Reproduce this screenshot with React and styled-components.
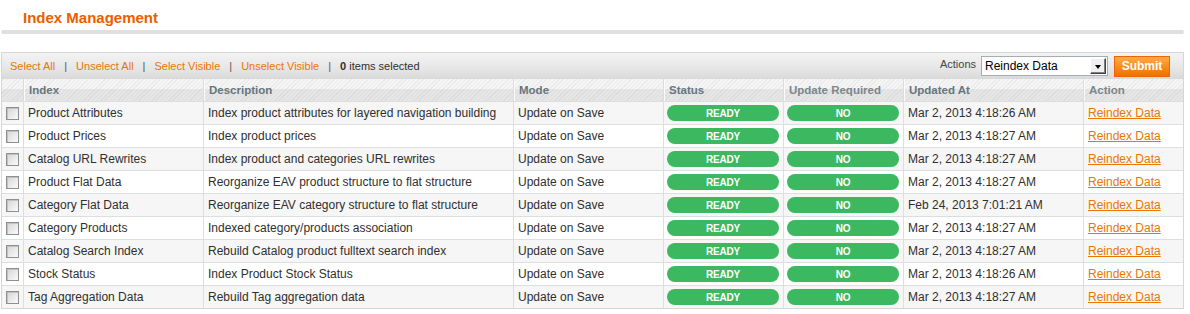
import React from "react";
import styled, { createGlobalStyle } from "styled-components";

const GlobalStyle = createGlobalStyle`
  html, body { margin: 0; padding: 0; background: #fff; }
  body { font-family: Arial, "Liberation Sans", Helvetica, sans-serif; font-size: 12px; color: #2f2f2f; }
  * { box-sizing: border-box; }
`;

const COLS = "21px 180px 310px 150px 120px 120px 180px 100px";

const Page = styled.div`
  width: 1190px;
  padding: 0 6px 0 1px;
`;

const ContentHeader = styled.div`
  padding-top: 9px;
`;

const Title = styled.h3`
  margin: 0;
  padding: 0 0 3px 22px;
  font-size: 15px;
  line-height: 18px;
  font-weight: bold;
  color: #eb5e00;
`;

const HeaderRule = styled.div`
  height: 4px;
  background: #dfdfdf;
  border-radius: 2px;
`;

const Grid = styled.div`
  margin-top: 18px;
  border: 1px solid #d6d6d6;
`;

const Massaction = styled.div`
  height: 26px;
  display: flex;
  align-items: center;
  padding: 0 13px 0 8px;
  background: linear-gradient(to bottom, #f3f3f3 0%, #e6e6e6 60%, #d9d9d9 100%);
  font-size: 11px;
`;

const MassLinks = styled.div`
  display: flex;
  align-items: center;
  flex: 1;
`;

const MassLink = styled.a`
  color: #ea7601;
  text-decoration: none;
  cursor: pointer;
`;

const Separator = styled.span`
  color: #555;
  padding: 0 9px 0 9px;
`;

const Count = styled.span`
  color: #2f2f2f;
  strong { font-weight: bold; }
`;

const ActionsBox = styled.div`
  display: flex;
  align-items: center;
`;

const ActionsLabel = styled.span`
  color: #444;
  font-size: 11px;
  margin-right: 5px;
  position: relative;
  top: -2px;
`;

const FakeSelect = styled.div`
  width: 127px;
  height: 20px;
  display: flex;
  align-items: center;
  justify-content: space-between;
  border: 1px solid #a5acb2;
  background: #fff;
  padding: 0 1px 0 3px;
  font-size: 12px;
  color: #000;
`;

const SelectArrow = styled.span`
  width: 16px;
  height: 16px;
  display: flex;
  align-items: center;
  justify-content: center;
  background: #f0f0f0;
  border: 1px solid;
  border-color: #fff #404040 #404040 #fff;
  box-shadow: inset -1px -1px 0 #808080;
  &::after {
    content: "";
    width: 0;
    height: 0;
    border-left: 3.5px solid transparent;
    border-right: 3.5px solid transparent;
    border-top: 4px solid #000;
    margin-top: 1px;
  }
`;

const SubmitButton = styled.button`
  margin-left: 6px;
  width: 56px;
  height: 21px;
  padding: 0;
  border: 1px solid #ed6502;
  background: linear-gradient(to bottom, #ffac47 0%, #f78e1e 50%, #f07100 100%);
  color: #fff;
  font-family: Arial, "Liberation Sans", sans-serif;
  font-weight: bold;
  font-size: 12px;
  cursor: pointer;
`;

const Row = styled.div`
  display: grid;
  grid-template-columns: ${COLS};
  height: 23px;
  border-bottom: 1px solid #dadfe0;
  background: ${(p) => (p.$odd ? "#f6f6f6" : "#ffffff")};
  &:last-child { border-bottom: none; height: 22px; }
`;

const HeadRow = styled.div`
  display: grid;
  grid-template-columns: ${COLS};
  height: 23px;
  border-bottom: 1px solid #dadfe0;
  background:
    repeating-linear-gradient(-45deg, rgba(0, 0, 0, 0.045) 0 1px, transparent 1px 3px),
    linear-gradient(to bottom, #f5f5f5 0, #f5f5f5 10px, #e6e6e6 10px, #e6e6e6 100%);
`;

const HeadCell = styled.div`
  display: flex;
  align-items: center;
  padding: 0 4px 0 5px;
  font-weight: bold;
  font-size: 11.5px;
  color: ${(p) => (p.$muted ? "#7b878d" : "#67767e")};
  border-left: ${(p) => (p.$first ? "none" : "1px solid #dadcdd")};
  box-shadow: ${(p) => (p.$first ? "none" : "inset 1px 0 0 #fbfbfb")};
  white-space: nowrap;
`;

const Cell = styled.div`
  display: flex;
  align-items: center;
  padding: ${(p) => (p.$badge ? "0 4px 0 3px" : "0 4px 0 4px")};
  border-left: ${(p) => (p.$first ? "none" : "1px solid #dadfe0")};
  justify-content: ${(p) => (p.$first ? "center" : "flex-start")};
  white-space: nowrap;
  overflow: hidden;
  font-size: 12px;
  color: #2f2f2f;
`;

const CheckBox = styled.span`
  display: block;
  width: 13px;
  height: 13px;
  border: 1px solid #8e8f8f;
  background: linear-gradient(135deg, #d4d4d4 0%, #ececec 60%, #fafafa 100%);
  box-shadow: inset 1px 1px 0 #c2c2c2;
  margin-top: 1px;
`;

const Badge = styled.span`
  display: flex;
  align-items: center;
  justify-content: center;
  width: 100%;
  height: 16px;
  border-radius: 8px;
  background: #3cb861;
  color: #fff;
  font-size: 10px;
  font-weight: bold;
  letter-spacing: -0.2px;
`;

const ActionLink = styled.a`
  color: #ea7601;
  text-decoration: underline;
  cursor: pointer;
`;

const rows = [
  ["Product Attributes", "Index product attributes for layered navigation building", "Mar 2, 2013 4:18:26 AM"],
  ["Product Prices", "Index product prices", "Mar 2, 2013 4:18:27 AM"],
  ["Catalog URL Rewrites", "Index product and categories URL rewrites", "Mar 2, 2013 4:18:27 AM"],
  ["Product Flat Data", "Reorganize EAV product structure to flat structure", "Mar 2, 2013 4:18:27 AM"],
  ["Category Flat Data", "Reorganize EAV category structure to flat structure", "Feb 24, 2013 7:01:21 AM"],
  ["Category Products", "Indexed category/products association", "Mar 2, 2013 4:18:27 AM"],
  ["Catalog Search Index", "Rebuild Catalog product fulltext search index", "Mar 2, 2013 4:18:27 AM"],
  ["Stock Status", "Index Product Stock Status", "Mar 2, 2013 4:18:26 AM"],
  ["Tag Aggregation Data", "Rebuild Tag aggregation data", "Mar 2, 2013 4:18:27 AM"],
];

export default function App() {
  return (
    <>
      <GlobalStyle />
      <Page>
        <ContentHeader>
          <Title>Index Management</Title>
          <HeaderRule />
        </ContentHeader>
        <Grid>
          <Massaction>
            <MassLinks>
              <MassLink>Select All</MassLink>
              <Separator>|</Separator>
              <MassLink>Unselect All</MassLink>
              <Separator>|</Separator>
              <MassLink>Select Visible</MassLink>
              <Separator>|</Separator>
              <MassLink>Unselect Visible</MassLink>
              <Separator>|</Separator>
              <Count>
                <strong>0</strong> items selected
              </Count>
            </MassLinks>
            <ActionsBox>
              <ActionsLabel>Actions</ActionsLabel>
              <FakeSelect>
                <span>Reindex Data</span>
                <SelectArrow />
              </FakeSelect>
              <SubmitButton>Submit</SubmitButton>
            </ActionsBox>
          </Massaction>
          <HeadRow>
            <HeadCell $first />
            <HeadCell>Index</HeadCell>
            <HeadCell>Description</HeadCell>
            <HeadCell>Mode</HeadCell>
            <HeadCell>Status</HeadCell>
            <HeadCell $muted>Update Required</HeadCell>
            <HeadCell>Updated At</HeadCell>
            <HeadCell $muted>Action</HeadCell>
          </HeadRow>
          {rows.map(([name, desc, date], i) => (
            <Row key={name} $odd={i % 2 === 0}>
              <Cell $first>
                <CheckBox />
              </Cell>
              <Cell>{name}</Cell>
              <Cell>{desc}</Cell>
              <Cell>Update on Save</Cell>
              <Cell $badge>
                <Badge>READY</Badge>
              </Cell>
              <Cell $badge>
                <Badge>NO</Badge>
              </Cell>
              <Cell>{date}</Cell>
              <Cell>
                <ActionLink>Reindex Data</ActionLink>
              </Cell>
            </Row>
          ))}
        </Grid>
      </Page>
    </>
  );
}
